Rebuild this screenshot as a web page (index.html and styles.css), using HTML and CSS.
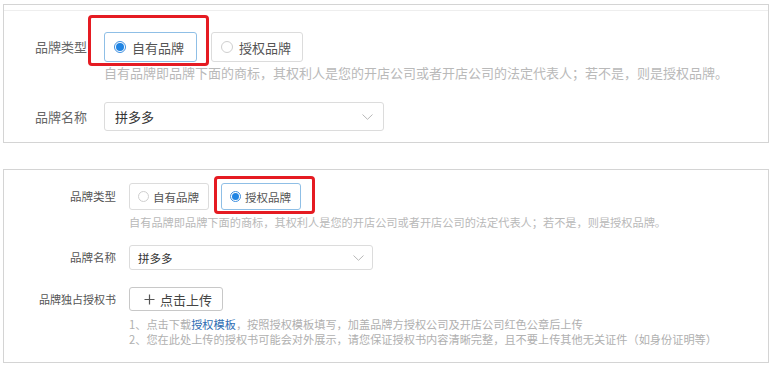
FILE: index.html
```html
<!DOCTYPE html>
<html lang="zh-CN">
<head>
<meta charset="utf-8">
<title>品牌信息</title>
<link rel="stylesheet" href="styles.css">
</head>
<body>
<section class="panel panel-lg">
  <div class="row row-type">
    <div class="label">品牌类型</div>
    <div class="field">
      <div class="radios">
        <div class="radio is-checked">
          <span class="dot"></span><span>自有品牌</span>
          <span class="mark"></span>
        </div>
        <div class="radio"><span class="dot"></span><span>授权品牌</span></div>
      </div>
      <p class="hint">自有品牌即品牌下面的商标，其权利人是您的开店公司或者开店公司的法定代表人；若不是，则是授权品牌。</p>
    </div>
  </div>
  <div class="row row-name">
    <div class="label">品牌名称</div>
    <div class="field">
      <div class="select">
        <span>拼多多</span>
        <svg class="chev" width="11" height="6" viewBox="0 0 11 6"><path d="M0.5 0.5 L5.5 5.3 L10.5 0.5" fill="none" stroke="#b8b8b8" stroke-width="1"/></svg>
      </div>
    </div>
  </div>
</section>

<section class="panel panel-sm">
  <div class="row row-type">
    <div class="label">品牌类型</div>
    <div class="field">
      <div class="radios">
        <div class="radio"><span class="dot"></span><span>自有品牌</span></div>
        <div class="radio is-checked">
          <span class="dot"></span><span>授权品牌</span>
          <span class="mark"></span>
        </div>
      </div>
      <p class="hint">自有品牌即品牌下面的商标，其权利人是您的开店公司或者开店公司的法定代表人；若不是，则是授权品牌。</p>
    </div>
  </div>
  <div class="row row-name">
    <div class="label">品牌名称</div>
    <div class="field">
      <div class="select">
        <span>拼多多</span>
        <svg class="chev" width="11" height="6" viewBox="0 0 11 6"><path d="M0.5 0.5 L5.5 5.3 L10.5 0.5" fill="none" stroke="#b8b8b8" stroke-width="1"/></svg>
      </div>
    </div>
  </div>
  <div class="row row-upload">
    <div class="label">品牌独占授权书</div>
    <div class="field">
      <button class="upload" type="button">
        <svg width="11" height="11" viewBox="0 0 11 11"><path d="M5.5 0.5 V10.5 M0.5 5.5 H10.5" fill="none" stroke="#555" stroke-width="1.2"/></svg>
        <span>点击上传</span>
      </button>
      <div class="tips">
        <p>1、点击下载<a class="link" href="#">授权模板</a>，按照授权模板填写，加盖品牌方授权公司及开店公司红色公章后上传</p>
        <p>2、您在此处上传的授权书可能会对外展示，请您保证授权书内容清晰完整，且不要上传其他无关证件（如身份证明等）</p>
      </div>
    </div>
  </div>
</section>
</body>
</html>
```

FILE: styles.css
```css
* { box-sizing: border-box; }

html, body {
  margin: 0;
  padding: 0;
  background: #ffffff;
}

body {
  padding: 4px 0 0 3px;
  font-family: "Noto Sans CJK SC", "Noto Sans", "Liberation Sans", sans-serif;
  color: #333;
}

p { margin: 0; }

.panel {
  width: 766px;
  border: 1px solid #d4d4d4;
  background: #fff;
}

.row {
  display: grid;
  align-items: start;
}

.label {
  white-space: nowrap;
}

.field {
  display: flex;
  flex-direction: column;
  align-items: flex-start;
}

.radios {
  display: flex;
}

.radio {
  position: relative;
  display: flex;
  align-items: center;
  border: 1px solid #dcdcdc;
  border-radius: 3px;
  background: #fff;
  white-space: nowrap;
}

.radio .dot {
  flex: none;
  border-radius: 50%;
  border: 1px solid #cfcfcf;
  background: #fff;
  display: flex;
  align-items: center;
  justify-content: center;
}

.radio.is-checked {
  border-color: #8fbfe6;
}

.radio.is-checked .dot {
  border-color: #3d8fe0;
}

.radio.is-checked .dot::after {
  content: "";
  display: block;
  border-radius: 50%;
  background: #1f84e3;
}

.mark {
  position: absolute;
  border: 3px solid #e51b22;
  border-radius: 4px;
  pointer-events: none;
}

.hint {
  color: #b9b9b9;
  white-space: nowrap;
}

.select {
  display: flex;
  align-items: center;
  justify-content: space-between;
  border: 1px solid #dcdcdc;
  border-radius: 3px;
  background: #fff;
  color: #333;
}

/* ---------- large panel ---------- */
.panel-lg {
  padding: 27px 0 11px;
  background-image: linear-gradient(#eeeeee, #eeeeee);
  background-size: 100% 1px;
  background-position: 0 5px;
  background-repeat: no-repeat;
}

.panel-lg .row {
  grid-template-columns: 100px 1fr;
}

.panel-lg .label {
  padding-left: 31px;
  font-size: 13px;
  line-height: 30px;
  color: #666;
}

.panel-lg .radios { gap: 14px; }

.panel-lg .radio {
  height: 30px;
  padding: 0 14px 0 9px;
  font-size: 13px;
  color: #555;
  gap: 6px;
}

.panel-lg .radio .dot { width: 12px; height: 12px; }
.panel-lg .radio.is-checked .dot::after { width: 8px; height: 8px; }

.panel-lg .radio:first-child { width: 93px; }
.panel-lg .radio:last-child { width: 92px; }

.panel-lg .mark {
  left: -17px;
  top: -18px;
  width: 121px;
  height: 51px;
}

.panel-lg .hint {
  margin-top: 3px;
  font-size: 13px;
  line-height: 16px;
}

.panel-lg .row-name { margin-top: 21px; }
.panel-lg .row-name .label { line-height: 29px; }

.panel-lg .select {
  width: 280px;
  height: 29px;
  padding: 0 10px 0 10px;
  font-size: 13px;
}

/* ---------- small panel ---------- */
.panel-sm {
  margin-top: 26px;
  padding: 13px 0 15px;
}

.panel-sm .row {
  grid-template-columns: 125px 1fr;
}

.panel-sm .label {
  text-align: right;
  padding-right: 13px;
  font-size: 11.5px;
  line-height: 27px;
  color: #555;
}

.panel-sm .radios { gap: 12px; }

.panel-sm .radio {
  width: 80px;
  height: 27px;
  padding: 0 8px;
  font-size: 11.5px;
  color: #555;
  gap: 4px;
}

.panel-sm .radio .dot { width: 11px; height: 11px; }
.panel-sm .radio.is-checked .dot::after { width: 7px; height: 7px; }

.panel-sm .mark {
  left: -8px;
  top: -8px;
  width: 101px;
  height: 38px;
}

.panel-sm .hint {
  margin-top: 4px;
  font-size: 11.2px;
  line-height: 16px;
}

.panel-sm .row-name { margin-top: 15px; }
.panel-sm .row-name .label { line-height: 25px; }

.panel-sm .select {
  width: 244px;
  height: 25px;
  padding: 0 8px 0 8px;
  font-size: 11.5px;
}

.panel-sm .row-upload { margin-top: 17px; }
.panel-sm .row-upload .label { line-height: 24px; font-size: 11px; }

.upload {
  display: flex;
  align-items: center;
  gap: 5px;
  height: 24px;
  width: 94px;
  padding: 0 0 0 14px;
  border: 1px solid #c8c8c8;
  border-radius: 3px;
  background: #fff;
  font-family: inherit;
  font-size: 13px;
  color: #444;
  cursor: pointer;
}

.tips {
  margin-top: 6px;
  font-size: 11.2px;
  line-height: 15px;
  color: #b0b0b0;
  white-space: nowrap;
}

.link {
  color: #2f6db3;
  text-decoration: none;
}
```
